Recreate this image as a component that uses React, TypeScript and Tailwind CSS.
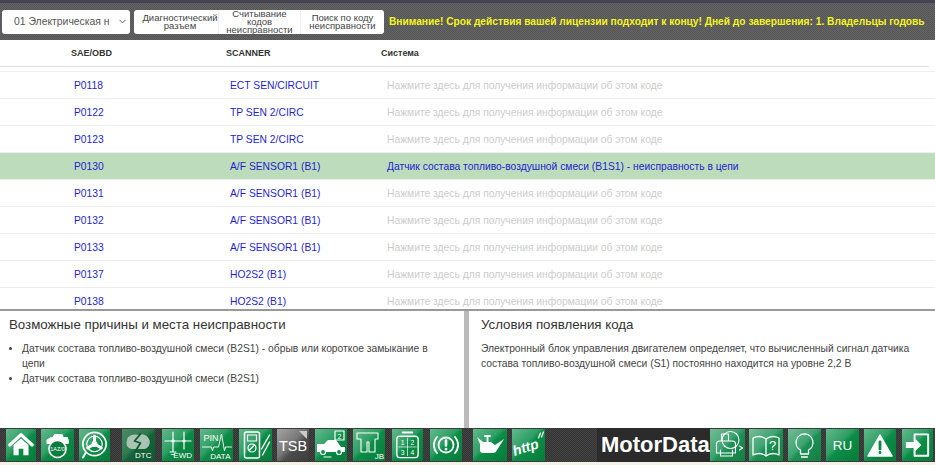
import type { ReactNode } from 'react';
import { ChevronDown } from 'lucide-react';

const rows = [
  { code: 'P0118', scanner: 'ECT SEN/CIRCUIT' },
  { code: 'P0122', scanner: 'TP SEN 2/CIRC' },
  { code: 'P0123', scanner: 'TP SEN 2/CIRC' },
  { code: 'P0130', scanner: 'A/F SENSOR1 (B1)', info: 'Датчик состава топливо-воздушной смеси (B1S1) - неисправность в цепи' },
  { code: 'P0131', scanner: 'A/F SENSOR1 (B1)' },
  { code: 'P0132', scanner: 'A/F SENSOR1 (B1)' },
  { code: 'P0133', scanner: 'A/F SENSOR1 (B1)' },
  { code: 'P0137', scanner: 'HO2S2 (B1)' },
  { code: 'P0138', scanner: 'HO2S2 (B1)' },
];

const tones = {
  normal: 'bg-[linear-gradient(135deg,#62b98a_0%,#2f9f66_42%,#0b8c46_52%,#067c3b_100%)]',
  soft: 'bg-[linear-gradient(135deg,#74bd94_0%,#3fa572_45%,#1c8f54_55%,#12803f_100%)]',
  dark: 'bg-[linear-gradient(135deg,#4e8a66_0%,#2d7a4f_45%,#14623a_55%,#0f5a34_100%)]',
  gray: 'bg-[linear-gradient(135deg,#a5a5a5_0%,#777_45%,#4c4c4c_60%,#3d3d3d_100%)]',
};

function Tile({ children, className, tone = 'normal' }: { children: ReactNode; className: string; tone?: keyof typeof tones }) {
  return (
    <div className={`${className} h-[32px] shrink-0 ${tones[tone]}`}>
      <svg viewBox="0 0 32 32" className="w-full h-full" fill="none" stroke="#fff" strokeWidth="1.2" strokeLinejoin="round" strokeLinecap="round">
        {children}
      </svg>
    </div>
  );
}

const label = 'fill-white stroke-none';

export default function App() {
  return (
    <div className="w-[935px] h-[465px] overflow-hidden bg-white flex flex-col font-['Liberation_Sans',Arial,sans-serif]">
      <div className="h-[3px] bg-[#45434f] shrink-0" />
      {/* Toolbar */}
      <div className="h-[37px] shrink-0 bg-[repeating-conic-gradient(#565656_0_25%,#646464_0_50%)] bg-[length:2px_2px] flex items-center pl-[2px] overflow-hidden">
        <div className="w-[128px] h-[24px] bg-white rounded-[3px] flex items-center justify-between pl-[12px] pr-[2px] text-[10.4px] text-[#555] shrink-0">
          <span className="whitespace-nowrap">01 Электрическая н</span>
          <ChevronDown className="w-[11px] h-[11px]" />
        </div>
        <div className="ml-[4px] w-[250px] h-[24px] bg-white rounded-[3px] flex shrink-0 text-[#444] text-[9.5px] leading-[8px] text-center">
          <div className="w-[85px] pl-[8px] flex items-center justify-center whitespace-nowrap border-r border-[#eee]">Диагностический<br />разъем</div>
          <div className="w-[82px] flex items-center justify-center border-r border-[#eee]">Считывание<br />кодов<br />неисправности</div>
          <div className="w-[83px] flex items-center justify-center">Поиск по коду<br />неисправности</div>
        </div>
        <div className="ml-[5px] whitespace-nowrap font-bold text-[10.2px] text-[#f5f51e]">
          Внимание! Срок действия вашей лицензии подходит к концу! Дней до завершения: 1. Владельцы годовь
        </div>
      </div>
      {/* Table head */}
      <div className="h-[26px] pt-[1px] shrink-0 flex items-center font-bold text-[9px] text-[#333]">
        <div className="w-[71px]" />
        <div className="w-[155px]">SAE/OBD</div>
        <div className="w-[155px]">SCANNER</div>
        <div>Система</div>
      </div>
      <div className="h-[1px] w-[929px] bg-[#ddd] shrink-0" />
      <div className="h-[5px] shrink-0 border-b border-[#eee]" />
      {/* Rows */}
      <div className="h-[237px] shrink-0 overflow-hidden">
        {rows.map((r) => (
          <div key={r.code} className={`h-[27px] pt-[1px] flex items-center border-b border-[#eee] text-[10.3px] ${r.info ? 'bg-[#bcdcbc]' : ''}`}>
            <div className="w-[74px]" />
            <div className="w-[156px] text-[#1f1fd0]">{r.code}</div>
            <div className="w-[157px] text-[#1f1fd0]">{r.scanner}</div>
            <div className={r.info ? 'text-[#1f1fd0]' : 'text-[#ccc]'}>{r.info ?? 'Нажмите здесь для получения информации об этом коде'}</div>
          </div>
        ))}
      </div>
      {/* Bottom panels */}
      <div className="h-[119px] shrink-0 flex border-t-2 border-[#999] text-[#444]">
        <div className="w-[464px] pl-[9px] pr-[20px] pt-[5px] overflow-hidden">
          <h2 className="text-[13.3px] leading-[18px] text-[#333]">Возможные причины и места неисправности</h2>
          <ul className="mt-[7px] text-[10.3px] leading-[15px] list-disc pl-[13px]">
            <li>Датчик состава топливо-воздушной смеси (B2S1) - обрыв или короткое замыкание в цепи</li>
            <li>Датчик состава топливо-воздушной смеси (B2S1)</li>
          </ul>
        </div>
        <div className="w-[5px] bg-[#bbb] shrink-0" />
        <div className="flex-1 pl-[12px] pr-[20px] pt-[5px]">
          <h2 className="text-[13.3px] leading-[18px] text-[#333]">Условия появления кода</h2>
          <p className="mt-[7px] text-[10.3px] leading-[15px]">
            Электронный блок управления двигателем определяет, что вычисленный сигнал датчика состава топливо-воздушной смеси (S1) постоянно находится на уровне 2,2 В
          </p>
        </div>
      </div>
      {/* Footer icons */}
      <div className="h-[34px] shrink-0 bg-[repeating-conic-gradient(#333_0_25%,#444_0_50%)] bg-[length:2px_2px] flex items-center">
        <Tile className="ml-[6px] w-[30px]">
          <path d="M4 16 16 5l12 11" strokeWidth="3.4" />
          <path d="M8 16 16 9l8 7v11h-5.500v-7h-5v7H8z" fill="#fff" stroke="none" />
        </Tile>
        <Tile className="ml-[5px] w-[33px]">
          <path d="M5 11c2-1 3-3 6-3l2-3h8l1 3h4c1 2 2 4 1 7H5z" fill="#fff" stroke="none" />
          <circle cx="16" cy="20" r="8.500" fill="#0b7c3f" strokeWidth="1.600" />
          <text x="16" y="22" fontSize="5.500" textAnchor="middle" className={label}>1AZ/0</text>
        </Tile>
        <Tile className="ml-[5px] w-[31px]">
          <circle cx="16" cy="15" r="12" strokeWidth="1.800" />
          <circle cx="16" cy="15" r="8" />
          <circle cx="16" cy="15" r="2.500" fill="#fff" />
          <path d="M16 7v5M9 19l5-3M23 19l-5-3" strokeWidth="3" />
          <path d="M7 24 4 29" strokeWidth="2" />
        </Tile>
        <Tile tone="dark" className="ml-[12px] w-[33px]">
          <path d="M5 9c3-4 8-4 11-3 4-2 9 0 11 5 1 4-1 8-5 9H11c-4 0-7-2-7-6z" fill="#a9c4b3" stroke="none" />
          <path d="m18 5-6 7 6 2-5 8" stroke="#0f5a34" strokeWidth="1.800" />
          <text x="29" y="29" fontSize="8" textAnchor="end" className={label}>DTC</text>
        </Tile>
        <Tile className="ml-[7px] w-[32px]">
          <path d="M11 3v20M22 3v17M3 12h26M8 23h6M9.500 25.500h3" />
          <circle cx="11" cy="12" r="1" fill="#fff" />
          <circle cx="22" cy="12" r="1" fill="#fff" />
          <text x="30" y="29" fontSize="8" textAnchor="end" className={label}>EWD</text>
        </Tile>
        <Tile className="ml-[6px] w-[33px]">
          <text x="3" y="12" fontSize="9" className={label}>PIN</text>
          <path d="M2 18h9l1 4 1-4h5l3-13 3 17 1-4h6" strokeWidth="0.900" />
          <text x="30" y="30" fontSize="8" textAnchor="end" className={label}>DATA</text>
        </Tile>
        <Tile className="ml-[6px] w-[33px]">
          <rect x="5" y="3" width="15" height="26" rx="2" strokeWidth="1.500" />
          <rect x="8" y="6" width="9" height="6" />
          <circle cx="12.500" cy="19" r="4" />
          <path d="m10 21 5-5" />
          <path d="M30 6 22 20M30 13l-7 13" strokeWidth="1.400" />
        </Tile>
        <Tile tone="gray" className="ml-[5px] w-[32px]">
          <path d="M22 2h8v8z" fill="#ccc" stroke="none" />
          <text x="16" y="22" fontSize="14.500" textAnchor="middle" className={label}>TSB</text>
        </Tile>
        <Tile className="ml-[6px] w-[32px]">
          <path d="M2 15h7l4-4h8l5 7h4v5H2z" fill="#fff" stroke="none" />
          <circle cx="8" cy="23" r="2.500" fill="#0b8c46" stroke="#fff" />
          <circle cx="24" cy="23" r="2.500" fill="#0b8c46" stroke="#fff" />
          <rect x="20" y="2" width="9" height="9" />
          <text x="24.500" y="9.500" fontSize="7" textAnchor="middle" className={label}>2</text>
          <path d="M9 28h7" />
        </Tile>
        <Tile className="ml-[6px] w-[32px]">
          <path d="M4 4h21v6h-3v13h-6V13h-2v10H8V10H4z" strokeWidth="1.100" />
          <text x="31" y="30" fontSize="8" textAnchor="end" className={label}>JB</text>
        </Tile>
        <Tile className="ml-[7px] w-[31px]">
          <rect x="5" y="7" width="22" height="22" rx="3" strokeWidth="1.400" />
          <path d="M11 3h10" strokeWidth="2" />
          <path d="M16 9v18M7 18h18" strokeWidth="0.700" />
          <text x="11" y="16" fontSize="7" textAnchor="middle" className={label}>1</text>
          <text x="21" y="16" fontSize="7" textAnchor="middle" className={label}>2</text>
          <text x="11" y="26" fontSize="7" textAnchor="middle" className={label}>3</text>
          <text x="21" y="26" fontSize="7" textAnchor="middle" className={label}>4</text>
        </Tile>
        <Tile className="ml-[7px] w-[32px]">
          <circle cx="16" cy="16" r="7.500" strokeWidth="1.800" />
          <path d="M16 11.500v5" strokeWidth="2.600" />
          <path d="M16 20v.2" strokeWidth="2.600" />
          <path d="M7 8a12 12 0 0 0 0 16M25 8a12 12 0 0 1 0 16" strokeWidth="1.800" />
        </Tile>
        <Tile className="ml-[11px] w-[34px]">
          <path d="M3 8l6 5h8l4 3 9-6-7 11c-1 2-2 3-4 3H9c-2 0-3-1-3-3v-6z" fill="#fff" stroke="none" />
          <path d="M11 7h5M13.500 7v6" strokeWidth="1.800" />
        </Tile>
        <Tile className="ml-[5px] w-[33px]">
          <text x="2" y="27" fontSize="14" fontStyle="italic" fontWeight="bold" transform="rotate(-18 2 27)" className={label}>http</text>
          <path d="M26 9l2-5M29 8l2-5" />
        </Tile>
        <div className="ml-[52px] h-[34px] w-[113px] shrink-0 bg-[#2b2b2b] pl-[4px] flex items-center text-white font-bold text-[22px] leading-none whitespace-nowrap">MotorData</div>
        <Tile tone="soft" className="w-[35px]">
          <circle cx="19" cy="11" r="8.500" strokeWidth="1.100" />
          <path d="M10 12V5h7v7M5 24v-9c0-2 1-3 3-3h13c2 0 3 1 3 3v9zM9 21v6h12v-6" strokeWidth="1.100" />
          <path d="M28 17l3 2-3 2" strokeWidth="1.100" />
        </Tile>
        <Tile tone="soft" className="ml-[4px] w-[34px]">
          <path d="M3 9c4-2 9-2 13 1 4-3 9-3 13-1v17c-4-2-9-2-13 1-4-3-9-3-13-1zM16 10v17" strokeWidth="1.300" />
          <text x="22.500" y="21" fontSize="13" textAnchor="middle" className={label}>?</text>
        </Tile>
        <Tile tone="soft" className="ml-[5px] w-[33px]">
          <path d="M16 5a8.500 8.500 0 0 1 4 16v4h-8v-4a8.500 8.500 0 0 1 4-16zM13 28h6" strokeWidth="1.300" />
        </Tile>
        <Tile className="ml-[5px] w-[33px]">
          <text x="16" y="21" fontSize="13.500" textAnchor="middle" className={label}>RU</text>
        </Tile>
        <Tile className="ml-[5px] w-[32px]">
          <path d="M16 6 28 27H4z" fill="#fff" strokeWidth="1.500" />
          <path d="M16 13v7M16 23.500v.2" stroke="#078a40" strokeWidth="2.800" />
        </Tile>
        <Tile className="ml-[6px] w-[31px]">
          <path d="M13 9V5h14v22H13v-4" strokeWidth="2" />
          <path d="M4 13h8V8l8 8-8 8v-5H4z" fill="#fff" stroke="none" />
        </Tile>
      </div>
      <div className="flex-1 bg-[#f5f1e8]" />
    </div>
  );
}
